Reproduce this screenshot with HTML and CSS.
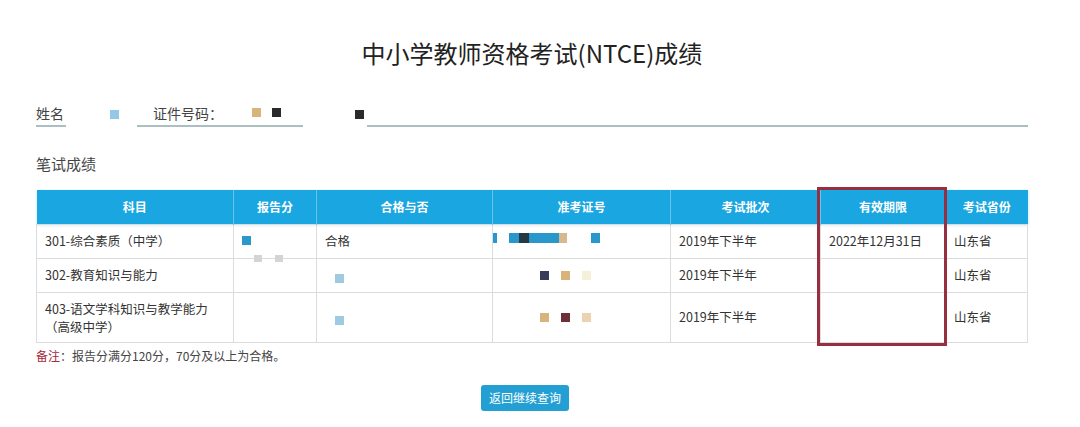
FILE: index.html
```html
<!DOCTYPE html>
<html lang="zh-CN">
<head>
    <meta charset="UTF-8">
    <title>中小学教师资格考试(NTCE)成绩</title>
    <link rel="stylesheet" href="styles.css">
</head>
<body>
    <div class="score-page">
        <h1 class="page-title">中小学教师资格考试(NTCE)成绩</h1>

        <div class="info-row">
            <div class="info-field field-name">姓名</div>
            <span class="sq sq-sky name-mark"></span>
            <div class="info-field field-id">
                <span class="id-label">证件号码：</span>
                <span class="sq sq-tan"></span>
                <span class="sq sq-black"></span>
            </div>
            <span class="sq sq-black id-mark"></span>
            <div class="info-field field-rest"></div>
        </div>

        <h2 class="section-title">笔试成绩</h2>

        <div class="table-wrap">
            <table class="score-table">
                <colgroup>
                    <col style="width:197px">
                    <col style="width:83px">
                    <col style="width:176px">
                    <col style="width:178px">
                    <col style="width:150px">
                    <col style="width:125px">
                    <col style="width:82px">
                </colgroup>
                <thead>
                    <tr>
                        <th>科目</th>
                        <th>报告分</th>
                        <th>合格与否</th>
                        <th>准考证号</th>
                        <th>考试批次</th>
                        <th>有效期限</th>
                        <th>考试省份</th>
                    </tr>
                </thead>
                <tbody>
                    <tr class="row-short">
                        <td>301-综合素质（中学）</td>
                        <td class="blur-cell">
                            <div class="blur-stack">
                                <span class="sq sq-blue"></span>
                                <div class="blur-line faint-line">
                                    <span class="sq sq-grey"></span>
                                    <span class="sq sq-grey"></span>
                                </div>
                            </div>
                        </td>
                        <td>合格</td>
                        <td class="blur-cell">
                            <div class="ticket-strip">
                                <span class="bar bar-blue bar-thin"></span>
                                <span class="bar bar-blue bar-a"></span>
                                <span class="bar bar-dark bar-b"></span>
                                <span class="bar bar-blue bar-c"></span>
                                <span class="bar bar-tan bar-d"></span>
                                <span class="bar bar-blue bar-e"></span>
                            </div>
                        </td>
                        <td>2019年下半年</td>
                        <td>2022年12月31日</td>
                        <td>山东省</td>
                    </tr>
                    <tr class="row-short">
                        <td>302-教育知识与能力</td>
                        <td></td>
                        <td class="blur-cell"><span class="sq sq-pale mark-pass"></span></td>
                        <td class="blur-cell">
                            <div class="ticket-marks">
                                <span class="sq sq-navy"></span>
                                <span class="sq sq-tan"></span>
                                <span class="sq sq-cream"></span>
                            </div>
                        </td>
                        <td>2019年下半年</td>
                        <td></td>
                        <td>山东省</td>
                    </tr>
                    <tr class="row-tall">
                        <td class="two-line">403-语文学科知识与教学能力<br>（高级中学）</td>
                        <td></td>
                        <td class="blur-cell"><span class="sq sq-pale mark-pass"></span></td>
                        <td class="blur-cell">
                            <div class="ticket-marks">
                                <span class="sq sq-tan"></span>
                                <span class="sq sq-maroon"></span>
                                <span class="sq sq-sand"></span>
                            </div>
                        </td>
                        <td>2019年下半年</td>
                        <td></td>
                        <td>山东省</td>
                    </tr>
                </tbody>
            </table>
            <div class="highlight-box"></div>
        </div>

        <p class="note"><span class="note-label">备注</span>：报告分满分120分，70分及以上为合格。</p>

        <div class="actions">
            <button class="back-btn" type="button">返回继续查询</button>
        </div>
    </div>
</body>
</html>
```

FILE: styles.css
```css
* {
    margin: 0;
    padding: 0;
    box-sizing: border-box;
}

body {
    background: #fff;
    color: #333;
    font-family: "Microsoft YaHei", "Noto Sans CJK SC", "Noto Sans", sans-serif;
    overflow: hidden;
}

.score-page {
    width: 1080px;
    padding: 0 52px 0 36px;
}

.page-title {
    text-align: center;
    font-size: 24px;
    font-weight: normal;
    line-height: 32px;
    color: #222;
    padding-top: 37px;
}

/* name / id row */
.info-row {
    display: flex;
    align-items: flex-end;
    margin-top: 30px;
    height: 28px;
}

.info-field {
    font-size: 14px;
    line-height: 24px;
    color: #444;
    border-bottom: 2px solid #a9bfc1;
    height: 27px;
    display: flex;
    align-items: center;
}

.field-name {
    width: 30px;
}

.name-mark {
    margin: 0 0 8px 44px;
    align-self: flex-end;
}

.field-id {
    width: 166px;
    margin-left: 18px;
    padding-left: 16px;
}

.id-label {
    width: 99px;
}

.field-id .sq + .sq {
    margin-left: 11px;
}

.id-mark {
    margin: 0 0 8px 52px;
}

.field-rest {
    flex: 1;
    margin-left: 3px;
}

.section-title {
    font-size: 15px;
    font-weight: normal;
    color: #444;
    margin-top: 26px;
    line-height: 22px;
}

/* table */
.table-wrap {
    position: relative;
    margin-top: 15px;
    width: 992px;
}

.score-table {
    width: 992px;
    table-layout: fixed;
    border-collapse: collapse;
    font-size: 12.5px;
}

.score-table th {
    background: #1aa6e0;
    color: #fff;
    font-weight: bold;
    font-size: 12px;
    height: 34px;
    text-align: center;
    border-left: 1px solid #6cc4ea;
    box-shadow: 0 1px 3px rgba(26, 166, 224, 0.3);
}

.score-table th:first-child {
    border-left: none;
}

.score-table td {
    border: 1px solid #dcdcdc;
    padding: 0 8px;
    color: #333;
    line-height: 16px;
    vertical-align: middle;
}

.score-table td.two-line {
    line-height: 18px;
    padding-top: 1px;
}

.row-short td {
    height: 34px;
}

.row-tall td {
    height: 50px;
}

/* blurred squares standing in for masked data */
.sq {
    display: inline-block;
    width: 9px;
    height: 9px;
    vertical-align: middle;
}

.sq-sky { background: #93c9e6; }
.sq-tan { background: #d8b37c; }
.sq-black { background: #2a2a2a; }
.sq-blue { background: #2b98cc; }
.sq-grey { background: #d4d4d4; width: 8px; height: 7px; }
.sq-pale { background: #9fcbe2; }
.sq-navy { background: #3a3a5a; }
.sq-cream { background: #f5f0d8; }
.sq-maroon { background: #6e3038; }
.sq-sand { background: #ecd3b0; }

.blur-stack {
    display: flex;
    flex-direction: column;
    padding-top: 2px;
}

.blur-line {
    display: flex;
    gap: 13px;
    margin: 10px 0 -14px 12px;
}

.mark-pass {
    margin-left: 10px;
    margin-top: 4px;
}

.ticket-strip {
    display: flex;
    align-items: center;
    height: 12px;
    margin: -6px 0 0 -8px;
}

.bar {
    display: block;
    height: 10px;
}

.bar-blue { background: #2a97cc; }
.bar-dark { background: #263a46; }
.bar-tan { background: #d7b98c; }

.bar-thin { width: 4px; }
.bar-a { width: 10px; margin-left: 12px; }
.bar-b { width: 10px; }
.bar-c { width: 30px; }
.bar-d { width: 8px; }
.bar-e { width: 9px; margin-left: 24px; }

.ticket-marks {
    display: flex;
    gap: 12px;
    padding-left: 39px;
}

.highlight-box {
    position: absolute;
    left: 781px;
    top: -3px;
    width: 130px;
    height: 159px;
    border: 3px solid #963040;
    pointer-events: none;
}

.note {
    font-size: 12px;
    color: #444;
    margin-top: 5px;
    line-height: 16px;
}

.note-label {
    color: #a52a3a;
}

.actions {
    display: flex;
    justify-content: center;
    margin-top: 21px;
    padding-right: 14px;
}

.back-btn {
    width: 88px;
    height: 26px;
    border: none;
    border-radius: 3px;
    background: #239fd3;
    color: #fff;
    font-family: inherit;
    font-size: 12px;
    cursor: pointer;
}
```
